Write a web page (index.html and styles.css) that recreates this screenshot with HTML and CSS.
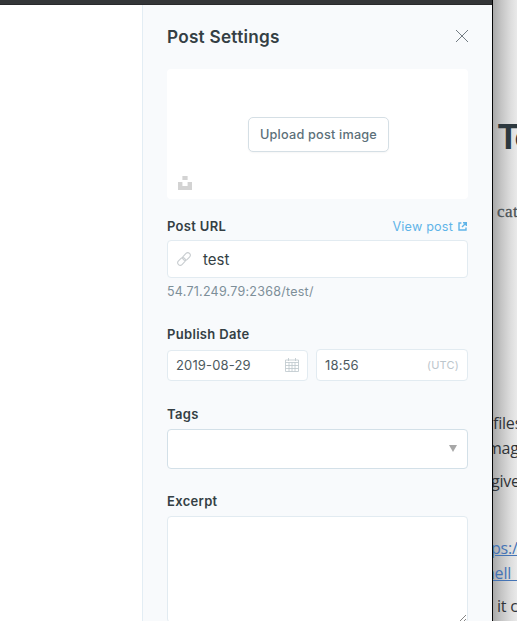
FILE: index.html
```
<!DOCTYPE html>
<html lang="en">
<head>
<meta charset="utf-8">
<title>Post Settings</title>
<link rel="stylesheet" href="styles.css">
</head>
<body>
<div class="desktop">
  <div class="window">
    <div class="topbar"></div>
    <div class="window-body">
      <main class="editor"></main>
      <aside class="panel">
        <header class="panel-header">
          <h4>Post Settings</h4>
          <svg class="close" width="14" height="14" viewBox="0 0 14 14"><path d="M1 1L13 13M13 1L1 13"/></svg>
        </header>
        <div class="uploader">
          <button class="upload-btn">Upload post image</button>
          <svg class="unsplash" width="14" height="14" viewBox="0 0 14 14"><path d="M4.4 0h5.2v4H4.4zM0 6h4.4v4h5.2V6H14v8H0z"/></svg>
        </div>
        <section class="group url">
          <div class="label-row">
            <label>Post URL</label>
            <a class="view">View post
              <svg width="9" height="9" viewBox="0 0 9 9"><path d="M3.4 1H1v7h7V5.600M5 .8h3.300v3.300M8 1L4 5"/></svg>
            </a>
          </div>
          <div class="field slug">
            <svg width="14" height="14" viewBox="0 0 14 14"><g transform="rotate(-45 7 7)"><rect x="-.8" y="4.500" width="8.600" height="5" rx="2.500"/><rect x="6.200" y="4.500" width="8.600" height="5" rx="2.500"/></g></svg>
            <span>test</span>
          </div>
          <p class="hint">54.71.249.79:2368/test/</p>
        </section>
        <section class="group date">
          <div class="label-row"><label>Publish Date</label></div>
          <div class="date-row">
            <div class="field day"><span>2019-08-29</span>
              <svg width="14" height="14" viewBox="0 0 14 14"><path d="M.5 2h13v11.500H.5zM.5 4.500h13M.5 7.500h13M.5 10.500h13M4 4.500v9M7 4.500v9M10 4.500v9M3.500 0v3M10.500 0v3"/></svg>
            </div>
            <div class="field time"><span>18:56</span><small>(UTC)</small></div>
          </div>
        </section>
        <section class="group tags">
          <div class="label-row"><label>Tags</label></div>
          <div class="field select"><i class="arrow"></i></div>
        </section>
        <section class="group excerpt">
          <div class="label-row"><label>Excerpt</label></div>
          <div class="field textarea">
            <svg width="8" height="8" viewBox="0 0 8 8"><path d="M1 8L8 1M5 8L8 5"/></svg>
          </div>
        </section>
      </aside>
    </div>
  </div>
  <div class="backdrop">
    <h1>Te</h1>
    <p class="serif">cat</p>
    <div class="prose">
      <p class="files">files</p>
      <p class="image">mage</p>
      <p class="given">give</p>
      <p class="link https">ps://</p>
      <p class="link shell">hell_</p>
      <p class="it">it c</p>
    </div>
  </div>
</div>
</body>
</html>
```
FILE: styles.css
```
* { box-sizing: border-box; }
body { margin: 0; font-family: Inter, "Liberation Sans", sans-serif; color: #343f44; }
h1, h4, p { margin: 0; }
.desktop { display: flex; width: 517px; height: 621px; overflow: hidden; }
.window { width: 493px; flex: none; display: flex; flex-direction: column; border-right: 1px solid #050505; background: #fff; }
.topbar { height: 5px; flex: none; background: #343638; border-bottom: 1px solid #28292b; }
.window-body { display: flex; flex: 1; min-height: 0; }
.editor { width: 142px; flex: none; }
.panel { flex: 1; min-width: 0; padding: 0 24px; background: #f8fafc; border-left: 1px solid #e3edf4; overflow: hidden; }
.panel-header { height: 64px; display: flex; justify-content: space-between; align-items: center; }
h4 { font-size: 17.200px; line-height: 24px; font-weight: 600; letter-spacing: .25px; }
.close { margin-right: -1px; margin-top: -2px; }
.close path { stroke: #737c83; stroke-width: 1; fill: none; }
.uploader { position: relative; height: 130px; display: flex; align-items: center; justify-content: center; padding-left: 2px; background: #fff; border-radius: 4px; }
.upload-btn { width: 141px; height: 35px; padding: 0; font: 500 12.700px/33px Inter, sans-serif; letter-spacing: .2px; color: #5c7079; background: #fff; border: 1px solid #d5dfe5; border-radius: 5px; box-shadow: 0 1px 2px rgba(0,0,0,.04); white-space: nowrap; }
.unsplash { position: absolute; left: 11px; bottom: 9px; fill: #d3d3d3; }
.label-row { display: flex; justify-content: space-between; height: 20px; line-height: 20px; }
label { font-size: 13px; font-weight: 600; letter-spacing: .32px; }
.view { display: flex; align-items: center; gap: 5px; height: 21px; margin-right: 1px; color: #5fb4e8; font-size: 12.600px; letter-spacing: .2px; }
.view svg { fill: none; stroke: #5fb4e8; stroke-width: 1.400; }
.field { background: #fff; border: 1px solid #e2ebf1; border-radius: 4px; display: flex; align-items: center; }
.url { padding-top: 17px; }
.url .label-row { height: 24px; }
.slug { height: 38px; padding: 0 9px; gap: 12px; font-size: 15px; }
.slug svg { fill: none; stroke: #c8cdd0; stroke-width: 1.100; }
.hint { margin-top: 4px; font-size: 12.500px; line-height: 20px; color: #7d8f99; letter-spacing: .25px; }
.date { padding-top: 22px; }
.date .label-row { height: 25px; }
.date-row { display: flex; align-items: center; gap: 8px; }
.day, .time { justify-content: space-between; padding: 0 8px; font-size: 13px; color: #4d5a60; letter-spacing: .15px; }
.day { width: 141px; height: 31px; }
.day svg { fill: none; stroke: #bdc7cc; stroke-width: .8; }
.time { flex: 1; height: 32px; }
.time small { font-size: 11px; color: #bcc6cc; letter-spacing: .2px; }
.tags { padding-top: 23px; }
.tags .label-row, .excerpt .label-row { height: 25px; }
.select { height: 40px; border-color: #d3e0e8; justify-content: flex-end; padding: 0 10px 2px 0; }
.arrow { border: 4px solid transparent; border-top: 7px solid #a7a7a7; border-bottom: 0; }
.excerpt { padding-top: 22px; }
.textarea { height: 107px; align-items: flex-end; justify-content: flex-end; padding-right: 1px; }
.textarea svg { fill: none; stroke: #666; stroke-width: .8; }
.backdrop { width: 24px; overflow: hidden; white-space: nowrap; color: #303438; background: linear-gradient(90deg, #a9a9a9, #c5c5c5 35%, #dedede 75%, #e9e9e9); }
h1 { margin: 114px 0 0 4px; font: 700 34px/46px Inter, sans-serif; letter-spacing: -2.500px; color: #2d383e; }
.serif { margin: 40px 0 0 4px; font: 500 17px/24px "Liberation Serif", serif; -webkit-text-stroke: .3px #4b5357; color: #4b5357; letter-spacing: .4px; }
.prose { padding-top: 187px; font: 16px/25px "Open Sans", "Noto Sans", sans-serif; letter-spacing: -.2px; }
.image { margin-left: -6px; }
.given { margin: 8px 0 0 -2px; }
.link { color: #4574b5; text-decoration: underline; }
.https { margin: 42px 0 0 -2px; }
.shell { margin-left: -8px; }
.it { margin: 8px 0 0 4px; }
```
